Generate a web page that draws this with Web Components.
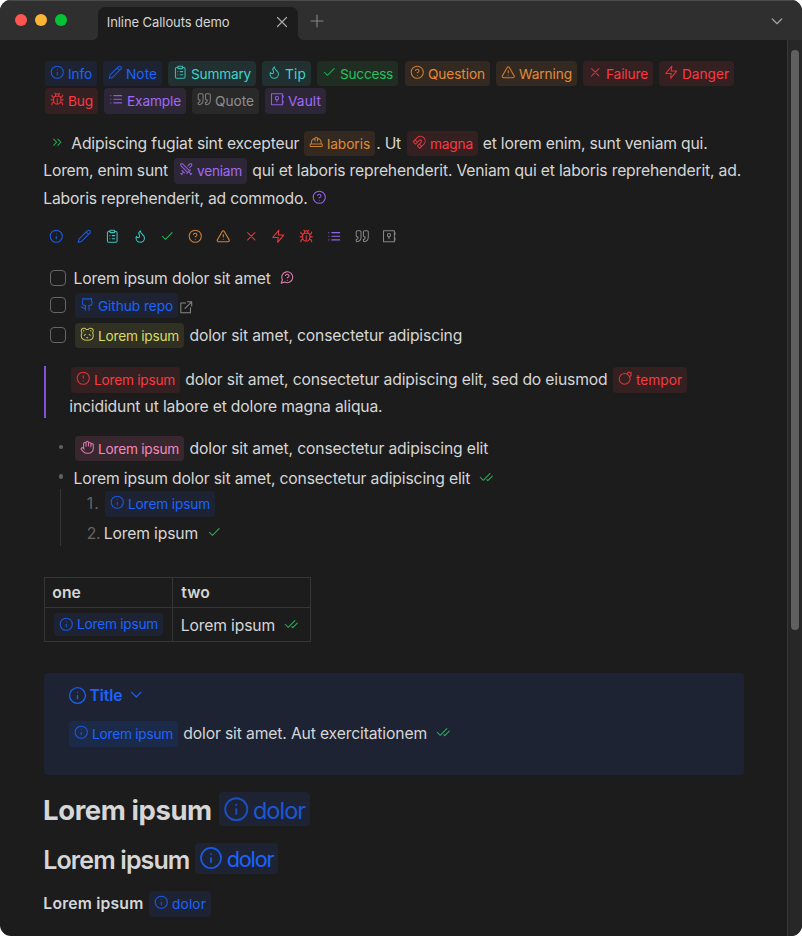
<!DOCTYPE html>
<html lang="en"><head><meta charset="utf-8"><title>Inline Callouts demo</title>
<style>
html,body{margin:0;background:#fff;height:936px;overflow:hidden}
body{font-family:Inter,"Liberation Sans",sans-serif;color:#d6d6d6}
</style></head><body>
<app-window>
<tab-bar slot="bar"></tab-bar>
<ui-row h="25" t="21" l="45">
<call-out c="blue" i="info" w="52">Info</call-out><call-out c="blue" i="pencil" w="59" g="6">Note</call-out><call-out c="cyan" i="clipboard" w="88" g="6">Summary</call-out><call-out c="cyan" i="flame" w="49" g="6">Tip</call-out><call-out c="green" i="check" w="81" g="6">Success</call-out><call-out c="orange" i="help" w="85" g="7">Question</call-out><call-out c="orange" i="alert" w="81" g="6">Warning</call-out><call-out c="red" i="x" w="70" g="6">Failure</call-out><call-out c="red" i="zap" w="75" g="6">Danger</call-out>
</ui-row>
<ui-row h="26" t="2" l="45">
<call-out c="red" i="bug" w="53" h="26">Bug</call-out><call-out c="purple" i="list" w="82" h="26" g="6">Example</call-out><call-out c="gray" i="quote" w="67" h="26" g="6">Quote</call-out><call-out c="purple" i="vault" w="61" h="26" g="6">Vault</call-out>
</ui-row>
<ui-row h="27" t="16" l="49.8"><ui-icon n="chevrons" c="green" up="1.5"></ui-icon><text-run g="6.2" w="229.3">Adipiscing fugiat sint excepteur</text-run><call-out c="orange" i="hat" w="71" g="4.2">laboris</call-out><text-run g="0.5" w="26">. Ut</text-run><call-out c="red" i="magnet" w="71" g="5.500">magna</call-out><text-run g="4" w="226">et lorem enim, sunt veniam qui.</text-run></ui-row>
<ui-row h="28" l="42.5" dy="0"><text-run w="126">Lorem, enim sunt</text-run><call-out c="purple" i="swords" w="73" h="26" g="5.5">veniam</call-out><text-run g="4.5" w="490">qui et laboris reprehenderit. Veniam qui et laboris reprehenderit, ad.</text-run></ui-row>
<ui-row h="26" l="42.5" dy="1"><text-run w="265.5">Laboris reprehenderit, ad commodo.</text-run><ui-icon n="help" c="purple" g="4.2" up="1"></ui-icon></ui-row>
<ui-row h="14" t="18" l="49.3" gap="13.25"><ui-icon n="info" c="blue"></ui-icon><ui-icon n="pencil" c="blue"></ui-icon><ui-icon n="clipboard" c="cyan"></ui-icon><ui-icon n="flame" c="cyan"></ui-icon><ui-icon n="check" c="green"></ui-icon><ui-icon n="help" c="orange"></ui-icon><ui-icon n="alert" c="orange"></ui-icon><ui-icon n="x" c="red"></ui-icon><ui-icon n="zap" c="red"></ui-icon><ui-icon n="bug" c="red"></ui-icon><ui-icon n="list" c="purple"></ui-icon><ui-icon n="quote" c="gray"></ui-icon><ui-icon n="vault" c="gray"></ui-icon></ui-row>
<ui-row h="20" t="25" l="50" dy="1"><check-box></check-box><text-run g="6.7" w="198.5">Lorem ipsum dolor sit amet</text-run><ui-icon n="msg" c="pink" g="9.3" up="1"></ui-icon></ui-row>
<ui-row h="25" t="5" l="50"><check-box></check-box><call-out c="blue" i="github" w="103" g="9">Github repo</call-out><ui-icon n="ext" c="gray" g="1" up="-1.3"></ui-icon></ui-row>
<ui-row h="25" t="5" l="50"><check-box></check-box><call-out c="yellow" i="panda" w="109" g="9">Lorem ipsum</call-out><text-run g="4.7" w="274">dolor sit amet, consectetur adipiscing</text-run></ui-row>
<quote-block>
<ui-row h="26" l="25" dy="0"><call-out c="red" i="alertc" w="109" h="26">Lorem ipsum</call-out><text-run g="4.5" w="423.5">dolor sit amet, consectetur adipiscing elit, sed do eiusmod</text-run><call-out c="red" i="bomb" w="74" h="26" g="5">tempor</call-out></ui-row>
<ui-row h="26" t="1" l="22.5" dy="0"><text-run w="314.5">incididunt ut labore et dolore magna aliqua.</text-run></ui-row>
</quote-block>
<ui-row h="25" t="18" l="58.5"><list-dot></list-dot><call-out c="pink" i="hand" w="109" g="11.5">Lorem ipsum</call-out><text-run g="4.7" w="300">dolor sit amet, consectetur adipiscing elit</text-run></ui-row>
<ui-row h="24" t="5" l="58.5" dy="1"><list-dot></list-dot><text-run g="9.2" w="398">Lorem ipsum dolor sit amet, consectetur adipiscing elit</text-run><ui-icon n="checks" c="green" g="8.8" up="1"></ui-icon></ui-row>
<nested-list>
<ui-row h="26" t="1" l="25" dy="0.5"><text-run w="14.5" col="#666">1.</text-run><call-out c="blue" i="info" w="110" h="26" g="4.5">Lorem ipsum</call-out></ui-row>
<ui-row h="25" t="4" l="25"><text-run w="14.5" col="#666">2.</text-run><text-run g="2.5" w="95.5">Lorem ipsum</text-run><ui-icon n="check" c="green" g="8.6" up="1.2"></ui-icon></ui-row>
</nested-list>
<data-table>
<ui-row slot="a" h="30" l="6.5" dy="0"><text-run w="30" b="600">one</text-run></ui-row><ui-row slot="b" h="30" l="7.4" dy="0"><text-run w="30" b="600">two</text-run></ui-row>
<ui-row slot="c" h="33" l="9"><call-out c="blue" i="info" w="109" h="23" iy="0.2">Lorem ipsum</call-out></ui-row><ui-row slot="d" h="35" l="7"><text-run w="95.5">Lorem ipsum</text-run><ui-icon n="checks" c="green" g="9" up="1"></ui-icon></ui-row>
</data-table>
<info-panel>
<ui-row h="20" t="12" l="23.500" dy="1"><ui-icon n="info" c="blue" s="19" up="0"></ui-icon><text-run g="2.3" w="34" b="600" col="#1b64ff">Title</text-run><ui-icon n="chev" c="blue" s="16.5" g="4.8" up="0.4"></ui-icon></ui-row>
<ui-row h="26" t="16" l="25" dy="0"><call-out c="blue" i="info" w="109" h="26">Lorem ipsum</call-out><text-run g="4.5" w="245">dolor sit amet. Aut exercitationem</text-run><ui-icon n="checks" c="green" g="8.8" up="1.5"></ui-icon></ui-row>
</info-panel>
<ui-row h="34" t="17" l="42.3"><text-run w="170" fs="27.500" b="700" up="-1.6">Lorem ipsum</text-run><call-out c="blue" i="info" w="91" h="34" s="26.500" fs="23.500" g="6.7" tx="34" iy="0" ty="-1.8" dim>dolor</call-out></ui-row>
<ui-row h="31" t="17" l="42.5"><text-run w="147.5" fs="25" b="600" up="-1">Lorem ipsum</text-run><call-out c="blue" i="info" w="83" h="31" s="24" fs="21.700" g="5.3" tx="31.5" iy="0.500" ty="-.6">dolor</call-out></ui-row>
<ui-row h="26" t="17" l="42.5" dy="0"><text-run w="101.5" b="600">Lorem ipsum</text-run><call-out c="blue" i="info" w="62" h="26" g="5">dolor</call-out></ui-row>
</app-window>
<script>
const I={
info:'<circle cx="12" cy="12" r="10"/><path d="M12 16v-4M12 8h.01"/>',
pencil:'<path d="M17 3a2.85 2.83 0 1 1 4 4L7.5 20.5 2 22l1.5-5.5ZM15 5l4 4"/>',
clipboard:'<rect width="8" height="4" x="8" y="2" rx="1"/><path d="M16 4h2a2 2 0 0 1 2 2v14a2 2 0 0 1-2 2H6a2 2 0 0 1-2-2V6a2 2 0 0 1 2-2h2M12 11h4M12 16h4M8 11h.01M8 16h.01"/>',
flame:'<path d="M8.5 14.5A2.5 2.5 0 0 0 11 12c0-1.38-.5-2-1-3-1.072-2.143-.224-4.054 2-6 .5 2.5 2 4.9 4 6.5 2 1.6 3 3.5 3 5.5a7 7 0 1 1-14 0c0-1.153.433-2.294 1-3a2.5 2.5 0 0 0 2.5 2.5z"/>',
check:'<path d="M20 6 9 17l-5-5"/>',
help:'<circle cx="12" cy="12" r="10"/><path d="M9.09 9a3 3 0 0 1 5.83 1c0 2-3 3-3 3M12 17h.01"/>',
alert:'<path d="m21.73 18-8-14a2 2 0 0 0-3.48 0l-8 14A2 2 0 0 0 4 21h16a2 2 0 0 0 1.73-3ZM12 9v4M12 17h.01"/>',
x:'<path d="M18 6 6 18M6 6l12 12"/>',
zap:'<path d="M13 2 3 14h9l-1 8 10-12h-9z"/>',
bug:'<path d="m8 2 1.88 1.88M14.12 3.88 16 2M9 7.13v-1a3.003 3.003 0 1 1 6 0v1M12 20c-3.3 0-6-2.7-6-6v-3a4 4 0 0 1 4-4h4a4 4 0 0 1 4 4v3c0 3.3-2.7 6-6 6M12 20v-9M6.53 9C4.6 8.8 3 7.1 3 5M6 13H2M3 21c0-2.1 1.7-3.9 3.8-4M20.97 5c0 2.1-1.6 3.8-3.5 4M22 13h-4M17.2 17c2.1.1 3.8 1.9 3.8 4"/>',
list:'<path d="M8 6h13M8 12h13M8 18h13M3 6h.01M3 12h.01M3 18h.01"/>',
quote:'<path d="M3 21c3 0 7-1 7-8V5c0-1.25-.756-2.017-2-2H4c-1.25 0-2 .75-2 1.972V11c0 1.25.75 2 2 2 1 0 1 0 1 1v1c0 1-1 2-2 2s-1 .008-1 1.031V20c0 1 0 1 1 1zM15 21c3 0 7-1 7-8V5c0-1.25-.757-2.017-2-2h-4c-1.25 0-2 .75-2 1.972V11c0 1.25.75 2 2 2h.75c0 2.25.25 4-2.75 4v3c0 1 0 1 1 1z"/>',
vault:'<path d="M2.500 3h18v18h-18zM21.500 6v3M21.500 15v3M11.500 12.500V16"/><circle cx="11.500" cy="10.300" r="2.700"/>',
chevrons:'<path d="m6 17 5-5-5-5M13 17l5-5-5-5"/>',
hat:'<path d="M2 18a1 1 0 0 0 1 1h18a1 1 0 0 0 1-1v-2a1 1 0 0 0-1-1H3a1 1 0 0 0-1 1v2zM10 10V5a1 1 0 0 1 1-1h2a1 1 0 0 1 1 1v5M4 15v-3a6 6 0 0 1 6-6M14 6a6 6 0 0 1 6 6v3"/>',
swords:'<path d="M14.500 17.500 3 6V3h3l11.500 11.500M13 19l6-6M16 16l4 4M19 21l2-2M14.500 6.500 18 3h3v3l-3.500 3.500M5 14l4 4M7 17l-3 3M3 19l2 2"/>',
magnet:'<path d="m6 15-4-4 6.750-6.770a7.790 7.790 0 0 1 11 11L13 22l-4-4 6.390-6.360a2.140 2.140 0 0 0-3-3L6 15M5 8l4 4M12 15l4 4"/>',
msg:'<path d="M7.900 20A9 9 0 1 0 4 16.100L2 22ZM9.090 9a3 3 0 0 1 5.830 1c0 2-3 3-3 3M12 17h.01"/>',
github:'<path d="M15 22v-4a4.800 4.800 0 0 0-1-3.500c3 0 6-2 6-5.500.08-1.250-.27-2.480-1-3.500.28-1.150.28-2.350 0-3.500 0 0-1 0-3 1.500-2.640-.5-5.360-.5-8 0C6 2 5 2 5 2c-.3 1.150-.3 2.350 0 3.500A5.403 5.403 0 0 0 4 9c0 3.500 3 5.500 6 5.500-.39.49-.68 1.050-.85 1.650-.17.6-.22 1.230-.15 1.850v4M9 18c-4.510 2-5-2-7-2"/>',
ext:'<path d="M11 5H3v16h16v-8M14 3h7v7M21 3 10 14"/>',
panda:'<path d="M11.250 17.250h1.500L12 18zM15 12l2 2M18 6.500a.5.5 0 0 0-.5-.5M20.690 9.670a4.500 4.500 0 1 0-7.040-5.500 8.350 8.350 0 0 0-3.300 0 4.500 4.500 0 1 0-7.040 5.500C2.490 11.200 2 12.880 2 14.500 2 19.470 6.480 22 12 22s10-2.530 10-7.500c0-1.620-.48-3.300-1.300-4.830M6 6.500a.495.495 0 0 1 .5-.5M9 12l-2 2"/>',
alertc:'<circle cx="12" cy="12" r="10"/><path d="M12 8v4M12 16h.01"/>',
bomb:'<circle cx="11" cy="13" r="9"/><path d="M14.350 4.650 16.300 2.700a2.410 2.410 0 0 1 3.400 0l1.600 1.600a2.400 2.400 0 0 1 0 3.400l-1.950 1.950M22 2l-1.500 1.500"/>',
hand:'<path d="M18 11V6a2 2 0 0 0-4 0M14 10V4a2 2 0 0 0-4 0v2M10 10.500V6a2 2 0 0 0-4 0v8M18 8a2 2 0 1 1 4 0v6a8 8 0 0 1-8 8h-2c-2.800 0-4.500-.86-5.990-2.340l-3.600-3.600a2 2 0 0 1 2.830-2.820L7 15"/>',
checks:'<path d="M18 6 7 17l-5-5M22 10l-7.500 7.500L13 16"/>',
chev:'<path d="m5 9 7 7 7-7"/>',
plus:'<path d="M3 12h18M12 3v18"/>'};
const C={blue:['#1b64ff','#1d2333'],cyan:['#3fd3cc','#213030'],green:['#25c05b','#1f2d23'],orange:['#e28b38','#332920'],red:['#f93a42','#342021'],purple:['#a06af8','#2d2636'],gray:['#8e8e8e','#292929'],yellow:['#d9dc63','#303023'],pink:['#f288bc','#38272f']};
const num=(e,n,d=0)=>e.hasAttribute(n)?+e.getAttribute(n):d;
const def=(n,f)=>customElements.define(n,class extends HTMLElement{connectedCallback(){if(!this.shadowRoot){const r=this.attachShadow({mode:'open'});f(this,r)}}});
def('ui-icon',(e,r)=>{const s=num(e,'s',14.5),c=e.getAttribute('c');
r.innerHTML=`<style>:host{display:block;flex:none;width:${s}px;height:${s}px;margin-left:${num(e,'g')}px;margin-top:${-2*num(e,'up')}px;color:${C[c]?C[c][0]:c||'inherit'}}svg{display:block;opacity:.92}</style><svg width="${s}" height="${s}" viewBox="0 0 24 24" fill="none" stroke="currentColor" stroke-width="${num(e,'sw',1.75)}" stroke-linecap="round" stroke-linejoin="round">${I[e.getAttribute('n')]}</svg>`});
/* Adjusts tracking so that a line of text occupies the given width. */
const fit=(host,span,w,n)=>{host.style.letterSpacing='0';host.style.letterSpacing=((w-span.getBoundingClientRect().width)/n)+'px'};
def('text-run',(e,r)=>{const w=num(e,'w')-1.3,row=e.closest('ui-row'),dy=row?num(row,'dy',.5):0;
r.innerHTML=`<style>:host{display:block;flex:none;width:${w}px;margin-left:${num(e,'g')+.8}px;margin-right:.5px;margin-top:${-2*num(e,'up',-dy)}px;white-space:nowrap;font-size:${num(e,'fs',15.7)}px;font-weight:${num(e,'b',440)};line-height:1.2;color:${e.getAttribute('col')||'inherit'}}span{display:inline-block}</style><span><slot></slot></span>`;
fit(e,r.querySelector('span'),w,e.textContent.length)});
def('call-out',(e,r)=>{const [f,b]=C[e.getAttribute('c')],w=num(e,'w'),h=num(e,'h',25),s=num(e,'s',14.5),tx=num(e,'tx',23),il=s>20?4:4.7,tw=w-tx-4.9;
r.innerHTML=`<style>:host{display:flex;flex:none;box-sizing:border-box;align-items:center;width:${w}px;height:${h}px;margin-left:${num(e,'g')}px;padding-left:${il}px;border-radius:4px;background:${b};color:${f}}ui-icon{opacity:.93}
.label{flex:none;width:${tw}px;margin-left:${tx-il-s}px;margin-top:${-2*num(e,'ty',h==25?-.5:0)}px;white-space:nowrap;font-size:${num(e,'fs',13.7)}px;font-weight:440;line-height:1.2}span{display:inline-block}</style><ui-icon n="${e.getAttribute('i')}" s="${s}" up="${num(e,'iy',h==26?2:1.7)}"></ui-icon><div class="label"><span><slot></slot></span></div>`;
if(e.closest('info-panel'))e.style.background='#1c2a4a';
if(e.hasAttribute('dim'))e.style.color='#1b58d6';
const l=r.querySelector('.label');fit(l,l.firstChild,tw,e.textContent.length);
const v=l.style.letterSpacing;l.style.letterSpacing='';e.style.letterSpacing=v});
def('check-box',(e,r)=>{r.innerHTML='<style>:host{display:block;flex:none;box-sizing:border-box;width:16px;height:16px;border:1px solid #666;border-radius:4px;margin-top:-1px}</style>'});
def('list-dot',(e,r)=>{r.innerHTML='<style>:host{display:block;flex:none;width:4.5px;height:4.5px;margin-right:.5px;border-radius:50%;background:#616161;margin-top:-3px}</style>'});
def('ui-row',(e,r)=>{r.innerHTML=`<style>:host{display:flex;align-items:center;box-sizing:border-box;height:${num(e,'h')}px;margin-top:${num(e,'t')}px;padding-left:${num(e,'l')}px;gap:${num(e,'gap')}px}</style><slot></slot>`});
def('quote-block',(e,r)=>{r.innerHTML='<style>:host{display:block;box-sizing:border-box;height:52px;margin:18px 0 0 44px;border-left:2px solid #8250df;padding-top:1px}</style><slot></slot>'});
def('nested-list',(e,r)=>{r.innerHTML='<style>:host{display:block;box-sizing:border-box;height:57px;margin:-1px 0 0 60px;border-left:1px solid #363636;padding-top:1px}</style><slot></slot>'});
def('data-table',(e,r)=>{r.innerHTML='<style>:host{display:grid;box-sizing:border-box;width:267px;height:65px;margin:31px 0 0 44px;grid-template:29px 33px/127px 137px;gap:1px;padding:1px;background:#363636}div{background:#1c1c1c}</style><div><slot name="a"></slot></div><div><slot name="b"></slot></div><div><slot name="c"></slot></div><div><slot name="d"></slot></div>'});
def('info-panel',(e,r)=>{r.innerHTML='<style>:host{display:flow-root;height:102px;width:700px;margin:31px 0 0 44px;background:#1d2333;border-radius:4px}</style><slot></slot>'});
def('tab-bar',(e,r)=>{r.innerHTML=`<style>:host{display:flex;box-sizing:border-box;height:40px;background:#2f2f2f;border-top:1px solid #4b4b4b;padding-left:15px;align-items:flex-start}
i{width:12px;height:12px;border-radius:50%;margin:13px 8px 0 0}
.tab{display:flex;align-items:center;box-sizing:border-box;width:200px;height:33px;margin:6px 0 0 23px;padding-left:8px;background:#1c1c1c;border-radius:7px 7px 0 0;position:relative}
.tab:before,.tab:after{content:"";position:absolute;bottom:0;width:5px;height:5px;left:-5px;background:radial-gradient(circle at 0 0,transparent 4.5px,#1c1c1c 5px)}
.tab:after{left:200px;background:radial-gradient(circle at 100% 0,transparent 4.5px,#1c1c1c 5px)}
.p{margin:12px 0 0 11px}.c{margin:12px 17px 0 auto}</style><i style="background:#ff5550"></i><i style="background:#ffb534"></i><i style="background:#04c435"></i><div class="tab"><text-run w="124" fs="13" up=".5">Inline Callouts demo</text-run><ui-icon n="x" c="#b5b5b5" s="18" g="43" up="1.5" sw="1.6"></ui-icon></div><ui-icon class="p" n="plus" c="#8b8b8b" s="16" sw="1.7"></ui-icon><ui-icon class="c" n="chev" c="#a8a8a8" s="16" sw="2"></ui-icon>`});
def('app-window',(e,r)=>{r.innerHTML=`<style>:host{display:flex;flex-direction:column;width:802px;height:936px;border-radius:11px;overflow:hidden;background:#1c1c1c}
.body{display:flex;flex:1;min-height:0}.doc{flex:none;width:787px;display:flow-root;overflow:hidden}.rail{box-sizing:border-box;width:15px;background:#272727;border-left:1px solid #383838;padding:10px 0 0 3px}.thumb{width:8px;height:580px;border-radius:4px;background:#606060}</style><slot name="bar"></slot><div class="body"><div class="doc"><slot></slot></div><div class="rail"><div class="thumb"></div></div></div>`});
</script></body></html>
